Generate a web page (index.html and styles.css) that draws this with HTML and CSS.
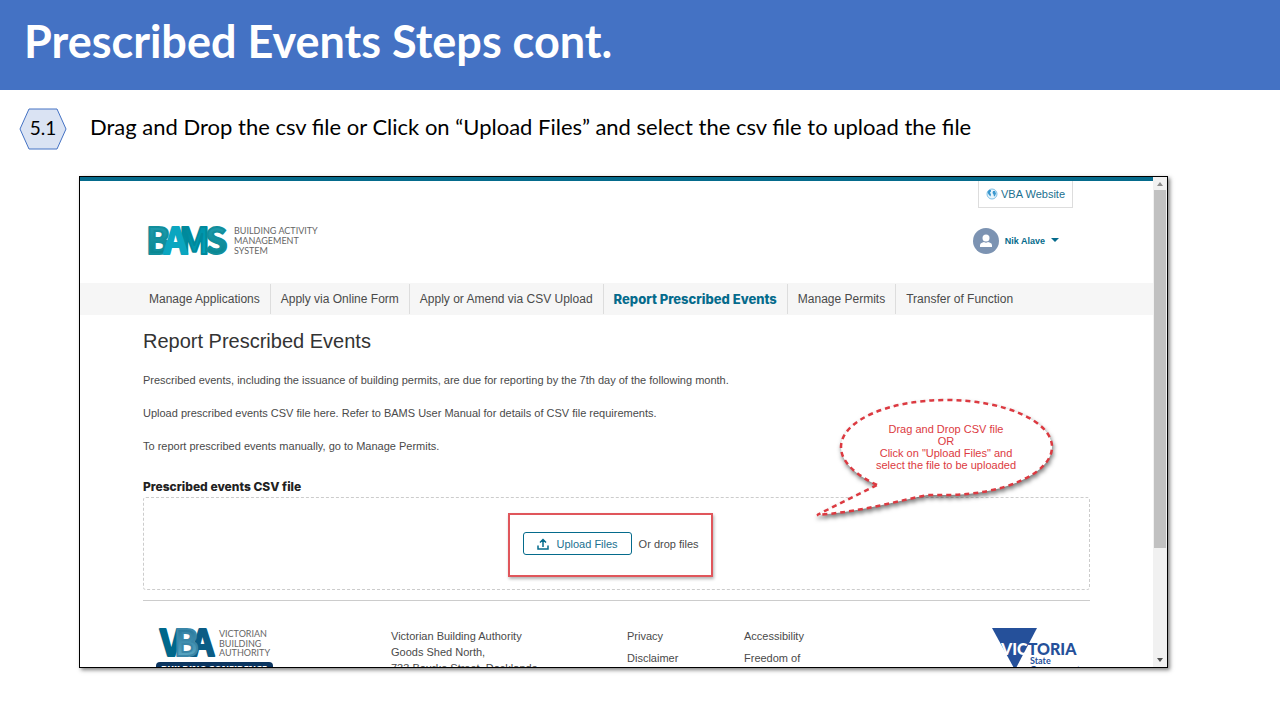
FILE: index.html
```html
<!DOCTYPE html>
<html lang="en">
<head>
<meta charset="utf-8">
<meta name="viewport" content="width=device-width, initial-scale=1.0">
<title>Prescribed Events Steps cont.</title>
<link rel="stylesheet" href="styles.css">
</head>
<body>
<div class="slide">
  <header class="slide-title">
    <h1>Prescribed Events Steps cont.</h1>
  </header>

  <div class="step">
    <svg class="step-number" width="48" height="42" viewBox="0 0 48 42">
      <polygon points="1,21 10,1 38,1 47,21 38,41 10,41" fill="#dae3f3" stroke="#4472c4"/>
      <text x="24" y="27" text-anchor="middle">5.1</text>
    </svg>
    <p>Drag and Drop the csv file or Click on “Upload Files” and select the csv file to upload the file</p>
  </div>

  <!-- Browser window -->
  <div class="window">
    <div class="page">
      <div class="page-header">
        <svg class="bams-logo" width="176" height="36" viewBox="0 0 176 36">
          <defs>
            <linearGradient id="bams1" x1="0" y1="0" x2="0" y2="1">
              <stop offset="0" stop-color="#2ba5bb"/><stop offset="1" stop-color="#007f86"/>
            </linearGradient>
            <linearGradient id="bams2" x1="0" y1="0" x2="1" y2="1">
              <stop offset="0" stop-color="#007c8c"/><stop offset="1" stop-color="#00a9c4"/>
            </linearGradient>
          </defs>
          <g class="logo-letters">
            <text x="-1" y="31" fill="url(#bams1)" stroke="#118e9c">B</text>
            <text x="32" y="31" fill="url(#bams2)" stroke="#00899c">M</text>
            <text x="17" y="31" fill="#0ba6c0" stroke="#0ba6c0">A</text>
            <text x="58" y="31" fill="url(#bams1)" stroke="#118e9c">S</text>
          </g>
          <g class="logo-caption">
            <text x="87" y="11">BUILDING ACTIVITY</text>
            <text x="87" y="21">MANAGEMENT</text>
            <text x="87" y="31">SYSTEM</text>
          </g>
        </svg>
        <div class="header-links">
          <a class="vba-link" href="#">
            <svg width="12" height="12" viewBox="0 0 12 12">
              <circle cx="6" cy="6" r="5" fill="#e8f5fc" stroke="#7fc0e6"/>
              <path d="M1.500 4L3 2L5 2L5 3.500L4 4.500L5 6.500L4.500 8.500L3 7L2 5.500ZM7 3L9 3L10 5.500L9 8L8 8.500L7.500 6.500L6.500 5Z" fill="#3a98cf"/>
            </svg>
            VBA Website
          </a>
          <button class="user-menu" type="button">
            <svg width="26" height="26" viewBox="0 0 26 26">
              <circle cx="13" cy="13" r="13" fill="#7c93b2"/>
              <circle cx="13" cy="10" r="3.500" fill="#fff"/>
              <path d="M7 19V17Q7 15 9.500 14.500L11 14Q13 15.500 15 14L16.500 14.500Q19 15 19 17V19Z" fill="#fff"/>
            </svg>
            Nik Alave
            <svg width="8" height="7" viewBox="0 0 8 7"><path d="M0 0H8L4 4Z" fill="#056b8c"/></svg>
          </button>
        </div>
      </div>

      <nav class="menu">
        <a href="#">Manage Applications</a>
        <a href="#">Apply via Online Form</a>
        <a href="#">Apply or Amend via CSV Upload</a>
        <a href="#" class="active">Report Prescribed Events</a>
        <a href="#">Manage Permits</a>
        <a href="#">Transfer of Function</a>
      </nav>

      <main class="content">
        <h2>Report Prescribed Events</h2>
        <p>Prescribed events, including the issuance of building permits, are due for reporting by the 7th day of the following month.</p>
        <p>Upload prescribed events CSV file here. Refer to BAMS User Manual for details of CSV file requirements.</p>
        <p>To report prescribed events manually, go to Manage Permits.</p>
        <label class="upload-label" for="upload">Prescribed events CSV file</label>
        <div class="dropzone">
          <div class="highlight">
            <button class="upload-button" id="upload" type="button">
              <svg width="12" height="12" viewBox="0 0 12 12" fill="none" stroke="#056b8c" stroke-width="1.500">
                <path d="M1 7.500V11H11V7.500M6 9V1.500M3 4.500L6 1.500L9 4.500"/>
              </svg>
              Upload Files
            </button>
            <span>Or drop files</span>
          </div>
        </div>
      </main>

      <footer class="page-footer">
        <svg class="vba-logo" width="120" height="54" viewBox="0 0 120 54">
          <defs>
            <linearGradient id="vba1" x1="0" y1="0" x2="0" y2="1">
              <stop offset="0" stop-color="#0d5f86"/><stop offset="1" stop-color="#6ab6d0"/>
            </linearGradient>
          </defs>
          <g class="logo-letters">
            <text x="4" y="28" fill="#00688b" stroke="#00688b">V</text>
            <text x="35" y="28" fill="#0b5c85" stroke="#0b5c85">A</text>
            <text x="18" y="28" fill="url(#vba1)" stroke="#3a86a8">B</text>
          </g>
          <g class="logo-caption">
            <text x="63" y="9">VICTORIAN</text>
            <text x="63" y="19">BUILDING</text>
            <text x="63" y="28">AUTHORITY</text>
          </g>
          <rect x="0" y="34" width="117" height="18" rx="4" fill="#0b3560"/>
          <text class="confidence" x="58" y="44" text-anchor="middle">BUILDING CONFIDENCE</text>
        </svg>
        <address>Victorian Building Authority<br>Goods Shed North,<br>733 Bourke Street, Docklands</address>
        <ul>
          <li><a href="#">Privacy</a></li>
          <li><a href="#">Disclaimer</a></li>
        </ul>
        <ul>
          <li><a href="#">Accessibility</a></li>
          <li><a href="#">Freedom of</a></li>
        </ul>
        <svg class="vic-logo" width="90" height="54" viewBox="0 0 90 54">
          <path d="M0 0H45L23 42Z" fill="#25509a"/>
          <text class="vic-name" x="9" y="27"><tspan fill="#fff">VIC</tspan><tspan fill="#25509a">TORIA</tspan></text>
          <text class="vic-state" x="38" y="36">State</text>
          <text class="vic-state" x="38" y="45">Government</text>
        </svg>
      </footer>

      <!-- Callout over the page -->
      <div class="callout">
        <svg width="250" height="130" viewBox="0 0 250 130">
          <path d="M67 90C48 81 31 68 31 52C31 26 78 5 136 5S242 26 242 52S194 100 136 100L117 100C80 108 48 117 7 120Z" fill="#fff" stroke="#dc3a41" stroke-width="2.500" stroke-dasharray="5 4"/>
        </svg>
        <p>Drag and Drop CSV file<br>OR<br>Click on "Upload Files" and<br>select the file to be uploaded</p>
      </div>
    </div>

    <div class="scrollbar">
      <svg width="14" height="13" viewBox="0 0 14 13"><path d="M4 9H10L7 5Z" fill="#8c8c8c"/></svg>
      <div class="thumb"></div>
      <svg width="14" height="13" viewBox="0 0 14 13"><path d="M4 4H10L7 8Z" fill="#505050"/></svg>
    </div>
  </div>
</div>
</body>
</html>
```

FILE: styles.css
```css
* {
  box-sizing: border-box;
}

body {
  margin: 0;
  background: #fff;
  font-family: "Liberation Sans", Arial, sans-serif;
  font-size: 11px;
  color: #4a4a4a;
}

a {
  color: inherit;
  text-decoration: none;
}

button {
  font: inherit;
  cursor: pointer;
}

svg {
  overflow: visible;
}

.slide {
  display: flex;
  flex-direction: column;
  height: 100vh;
  padding-bottom: 52px;
}

.slide-title {
  flex: none;
  padding: 15px 24px 23px;
  background: #4472c4;
  color: #fff;
}

.slide-title h1 {
  margin: 0;
  font-family: Lato, Calibri, sans-serif;
  font-size: 45px;
  line-height: 52px;
}

.step {
  flex: none;
  display: flex;
  align-items: center;
  gap: 23px;
  padding: 18px 19px 26px;
  font-family: Lato, Calibri, sans-serif;
  color: #000;
}

.step p {
  margin: 0;
  padding-bottom: 4px;
  font-size: 22px;
  line-height: 28px;
}

.step-number {
  flex: none;
  font-size: 19px;
}

/* Browser window */
.window {
  flex: 1;
  display: flex;
  min-height: 0;
  margin: 0 112px 0 79px;
  border: 1px solid #000;
  box-shadow: 2px 2px 4px rgba(0, 0, 0, 0.5);
  overflow: hidden;
}

.page {
  position: relative;
  flex: 1;
  border-top: 4px solid #056b8c;
  overflow: hidden;
}

.scrollbar {
  display: flex;
  flex-direction: column;
  justify-content: space-between;
  width: 14px;
  background: #f1f1f1;
}

.scrollbar .thumb {
  flex: 0 0 73%;
  margin: 0 1px auto;
  background: #c1c1c1;
}

.page-header {
  display: flex;
  justify-content: space-between;
  padding: 0 80px 0 67px;
  height: 102px;
}

.bams-logo {
  margin-top: 42px;
}

.logo-letters {
  font-family: "Noto Sans CJK SC", sans-serif;
  font-size: 36px;
  font-weight: bold;
  stroke-width: 2px;
  stroke-linejoin: round;
}

.logo-caption {
  font-family: Lato, sans-serif;
  font-size: 9px;
  fill: #666;
}

.header-links {
  display: flex;
  flex-direction: column;
  align-items: flex-end;
}

.vba-link {
  display: flex;
  align-items: center;
  gap: 3px;
  height: 27px;
  padding: 0 7px;
  border: 1px solid #ddd;
  border-top: 0;
  color: #20708f;
}

.user-menu {
  display: flex;
  align-items: center;
  gap: 6px;
  margin: 20px 14px 0 0;
  padding: 0;
  border: 0;
  background: none;
  color: #056b8c;
  font-size: 9px;
  font-weight: bold;
}

.menu {
  display: flex;
  padding: 1px 59px;
  background: #f6f6f6;
  font-size: 12px;
}

.menu a {
  padding: 0 10px;
  border-right: 1px solid #ddd;
  line-height: 30px;
}

.menu a:last-child {
  border-right: 0;
}

.menu .active,
.upload-label {
  font-family: Inter, "Liberation Sans", sans-serif;
  font-size: 12px;
  font-weight: 800;
}

.menu .active {
  font-size: 13px;
  color: #056b8c;
}

.content {
  margin: 0 63px;
  padding: 13px 0 10px;
  border-bottom: 1px solid #ccc;
}

.content h2 {
  margin: 0 0 16px;
  font-size: 20px;
  font-weight: normal;
  line-height: 26px;
  color: #333;
}

.content p {
  margin: 0 0 13px;
  line-height: 20px;
}

.upload-label {
  display: block;
  padding-top: 8px;
  line-height: 20px;
  color: #222;
}

.dropzone {
  display: flex;
  justify-content: center;
  padding: 15px 12px 12px 0;
  border: 1px dashed #ccc;
  border-radius: 3px;
}

.highlight {
  display: flex;
  align-items: center;
  gap: 7px;
  padding: 17px 12px 20px 13px;
  border: 2px solid #e0565b;
  box-shadow: 1px 2px 3px rgba(0, 0, 0, 0.3);
}

.upload-button {
  display: flex;
  align-items: center;
  gap: 7px;
  height: 23px;
  padding: 0 13px;
  border: 1px solid #056b8c;
  border-radius: 3px;
  background: #fff;
  color: #20708f;
}

.page-footer {
  display: grid;
  grid-template-columns: 248fr 236fr 117fr 248fr 98fr;
  margin: 0 63px;
  padding-top: 27px;
}

.page-footer address {
  font-style: normal;
  line-height: 16px;
}

.page-footer ul {
  margin: 0;
  padding: 0;
  list-style: none;
}

.page-footer li {
  margin-bottom: 6px;
  line-height: 16px;
}

.vba-logo {
  margin-left: 13px;
}

.confidence {
  font-family: "Open Sans", sans-serif;
  font-size: 9px;
  font-weight: 800;
  fill: #fff;
}

.vic-name {
  font-family: Lato, sans-serif;
  font-size: 16px;
  font-weight: 900;
}

.vic-state {
  font-family: Lato, sans-serif;
  font-size: 9px;
  font-weight: bold;
  fill: #25509a;
}

/* Speech bubble, lies over the page */
.callout {
  position: absolute;
  top: 214px;
  right: 93px;
  width: 250px;
  color: #dc3a41;
}

.callout svg {
  display: block;
  filter: drop-shadow(1px 3px 2px rgba(0, 0, 0, 0.5));
}

.callout p {
  position: absolute;
  top: 28px;
  left: 56px;
  width: 160px;
  margin: 0;
  text-align: center;
  line-height: 12px;
}
```
